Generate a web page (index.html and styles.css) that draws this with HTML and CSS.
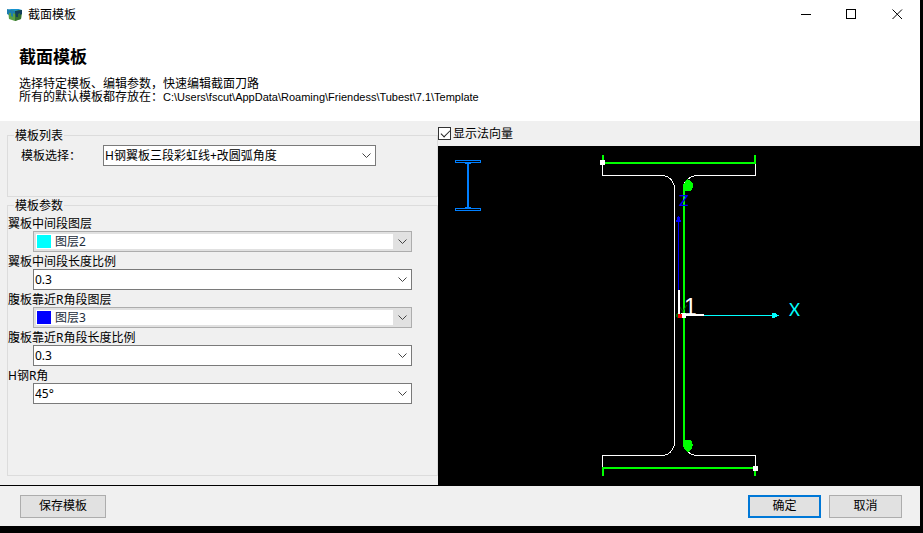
FILE: index.html
```html
<!DOCTYPE html>
<html lang="zh-CN">
<head>
<meta charset="utf-8">
<title>截面模板</title>
<link rel="stylesheet" href="styles.css">
</head>
<body>
<div class="window">
  <header class="titlebar">
    <svg class="app-icon" width="16" height="14" viewBox="0 0 16 14" aria-hidden="true">
      <path d="M1 2 15 2 14 11 8 13 2 11z" fill="#5aa046"/>
      <path d="M8 3 15 2l-1 9-6 2z" fill="#35702f"/>
      <path d="M8 3 15 2v4l-2 1V5l-2 1v3L9 9z" fill="#123f5c"/>
      <path d="M0 1H15L8 3z" fill="#1793cf"/>
      <path d="M0 1 8 3v3L6 5v4L4 8V5H2v2L0 6z" fill="#1c7eae"/>
    </svg>
    <span class="titlebar-text">截面模板</span>
    <div class="window-controls">
      <button type="button" aria-label="最小化"><svg width="11" height="11"><path d="M1 5.500H11"/></svg></button>
      <button type="button" aria-label="最大化"><svg width="11" height="11"><path d="M.5.5h9v9h-9z"/></svg></button>
      <button type="button" aria-label="关闭"><svg class="smooth" width="11" height="11"><path d="M.5.5l9.500 9.500M10 .5.5 10"/></svg></button>
    </div>
  </header>
  <section class="intro">
    <h1>截面模板</h1>
    <p>选择特定模板、编辑参数，快速编辑截面刀路</p>
    <p>所有的默认模板都存放在：<span class="path">C:\Users\fscut\AppData\Roaming\Friendess\Tubest\7.1\Template</span></p>
  </section>
  <main class="content">
    <form class="settings">
      <fieldset class="group">
        <legend>模板列表</legend>
        <div class="template-row">
          <label for="template">模板选择：</label>
          <div class="combo">
            <select id="template"><option>H钢翼板三段彩虹线+改圆弧角度</option></select>
            <svg class="chevron" width="9" height="6"><path d="M.5.5l4 4 4-4"/></svg>
          </div>
        </div>
      </fieldset>
      <fieldset class="group params">
        <legend>模板参数</legend>
        <label for="flange-layer">翼板中间段图层</label>
        <div class="combo layer">
          <span class="swatch cyan"></span>
          <select id="flange-layer"><option>图层2</option></select>
          <svg class="chevron" width="9" height="6"><path d="M.5.5l4 4 4-4"/></svg>
        </div>
        <label for="flange-ratio">翼板中间段长度比例</label>
        <div class="combo">
          <select id="flange-ratio"><option>0.3</option></select>
          <svg class="chevron" width="9" height="6"><path d="M.5.5l4 4 4-4"/></svg>
        </div>
        <label for="web-layer">腹板靠近R角段图层</label>
        <div class="combo layer">
          <span class="swatch blue"></span>
          <select id="web-layer"><option>图层3</option></select>
          <svg class="chevron" width="9" height="6"><path d="M.5.5l4 4 4-4"/></svg>
        </div>
        <label for="web-ratio">腹板靠近R角段长度比例</label>
        <div class="combo">
          <select id="web-ratio"><option>0.3</option></select>
          <svg class="chevron" width="9" height="6"><path d="M.5.5l4 4 4-4"/></svg>
        </div>
        <label for="r-angle">H钢R角</label>
        <div class="combo">
          <select id="r-angle"><option>45°</option></select>
          <svg class="chevron" width="9" height="6"><path d="M.5.5l4 4 4-4"/></svg>
        </div>
      </fieldset>
    </form>
    <section class="preview">
      <label class="normal-toggle"><input type="checkbox" checked>显示法向量</label>
      <svg class="drawing" viewBox="0 0 482 339" role="img" aria-label="H钢截面">
        <g class="thumb">
          <rect x="17.500" y="14.500" width="25" height="2"/>
          <rect x="17.500" y="62.500" width="25" height="2"/>
          <path d="M27 17.500h6M27 61.500h6"/>
          <path class="thick" d="M30 18v44"/>
        </g>
        <path class="profile" d="M164.500 17V29.500H224A12.500 13.500 0 0 1 236.500 43V296A12.500 13.500 0 0 1 224 309.500H164.500V322"/>
        <path class="profile" d="M317.500 17V29.500H258Q251 30 246 38M317.500 322V309.500H258Q251 309 246 301"/>
        <path class="axis-z" d="M240.500 74V144"/>
        <path class="fill-z" d="M240 70H241L243.500 76H237.500z"/>
        <path class="cut" d="M165 9V17H317M317 9V18M246 40V298M165 330V322H317M317 322V330"/>
        <path class="fill-cut" d="M245 39 247 36 249.500 33 252 34.500 255 37.500V41L253 45H247L245 44z"/>
        <path class="fill-cut" d="M247 294H253L255 299 254 302 250 306 247 304 245 300z"/>
        <text class="label-z" x="241" y="60">Z</text>
        <text class="label-y" x="240" y="170">Y</text>
        <circle cx="241" cy="169.500" r="3" fill="#006400"/>
        <path class="origin" d="M241 144V169H266"/>
        <rect class="node" x="243" y="167" width="5" height="5"/>
        <rect x="240" y="168" width="4" height="4" fill="#f00"/>
        <path class="axis-x" d="M266 169.500H336"/>
        <path class="fill-x" d="M334 166.500H336L341 169.500 336 172H334z"/>
        <text class="label-x" x="351" y="170">X</text>
        <text class="label-index" x="246" y="169">1</text>
        <rect class="node" x="162" y="14" width="5" height="5"/>
        <rect class="node" x="315" y="320" width="5" height="5"/>
      </svg>
    </section>
  </main>
  <footer class="actions">
    <button type="button" class="save">保存模板</button>
    <button type="button" class="primary">确定</button>
    <button type="button">取消</button>
  </footer>
</div>
</body>
</html>
```
FILE: styles.css
```css
* { box-sizing: border-box; }

body {
  margin: 0;
  background: #000;
  color: #000;
  font: 12px/16px "Noto Sans", "Noto Sans CJK SC", sans-serif;
}

h1, p { margin: 0; }

button, select, input { font: inherit; color: inherit; }

.window {
  display: flex;
  flex-direction: column;
  min-height: calc(100vh - 7px);
  margin-right: 3px;
  background: #f0f0f0;
}

.titlebar {
  display: flex;
  align-items: center;
  height: 29px;
  padding-left: 7px;
  background: #fff;
}

.titlebar-text { margin-left: 5px; }

.window-controls { display: flex; margin-left: auto; }

.window-controls button {
  display: grid;
  place-items: center;
  width: 46px;
  height: 29px;
  padding: 0;
  border: 0;
  background: none;
}

.window-controls svg {
  fill: none;
  stroke: #000;
  shape-rendering: crispEdges;
}

.window-controls .smooth { shape-rendering: auto; }

.intro {
  height: 92px;
  padding: 16px 19px 0;
  background: #fff;
}

.intro h1 {
  margin-bottom: 8px;
  font-size: 17px;
  line-height: 24px;
}

.intro p { line-height: 13px; }

.path { font-family: "Liberation Sans", sans-serif; font-size: 11px; }

.content {
  display: grid;
  grid-template-columns: 438fr 482fr;
  flex: 1;
}

.settings {
  display: flex;
  flex-direction: column;
  min-width: 0;
  padding: 6px 0 9px 7px;
}

.group {
  min-width: 0;
  height: 70px;
  margin: 0;
  padding: 0;
  border: 1px solid #dcdcdc;
}

.group legend {
  margin-left: 6px;
  padding: 0 1px;
  line-height: 17px;
}

.template-row {
  display: flex;
  align-items: center;
  padding: 1px 61px 0 13px;
}

.template-row label { flex: 0 0 82px; }

.template-row .combo { flex: 1; }

.params { flex: 1; height: auto; }

.params label {
  display: block;
  height: 17px;
  line-height: 19px;
}

.params .combo { margin: 0 25px; }

.combo {
  display: flex;
  position: relative;
  height: 21px;
  border: 1px solid #7a7a7a;
  background: #fff;
}

.combo select {
  flex: 1;
  min-width: 0;
  padding: 0 20px 0 1px;
  border: 0;
  border-radius: 0;
  background: transparent;
  appearance: none;
}

.chevron {
  position: absolute;
  right: 4px;
  top: 7px;
  fill: none;
  stroke: #444;
  pointer-events: none;
}

.layer {
  padding: 2px 18px 2px 2px;
  border-color: #adadad;
  background: #e1e1e1;
}

.layer select {
  padding: 0 0 0 3px;
  background: #fff;
  color: #222b3a;
}

.swatch {
  width: 16px;
  border: 1px solid #fff;
}

.cyan { background: #0ff; }

.blue { background: #00f; }

.preview {
  display: flex;
  flex-direction: column;
  min-width: 0;
}

.normal-toggle {
  display: flex;
  align-items: center;
  gap: 2px;
  height: 25px;
}

.normal-toggle input {
  width: 13px;
  height: 13px;
  margin: 0;
  border: 1px solid #333;
  background: #fff;
  appearance: none;
}

.normal-toggle input:checked::before {
  content: "";
  display: block;
  width: 8px;
  height: 4px;
  margin: 2px 0 0 2px;
  border: solid #222;
  border-width: 0 0 1px 1px;
  transform: rotate(-45deg);
}

.drawing {
  flex: 1;
  width: 100%;
  min-height: 0;
  background: #000;
  fill: none;
  shape-rendering: crispEdges;
}

.thumb { stroke: #007fff; }

.thick, .cut, .origin { stroke-width: 2; }

.profile, .origin { stroke: #fff; }

.cut { stroke: #0f0; }

.fill-cut { fill: #0f0; }

.axis-z { stroke: #00f; }

.fill-z { fill: #00f; }

.axis-x { stroke: #0ff; }

.fill-x { fill: #0ff; }

.node { fill: #fff; }

.drawing text { font: 17px Lato, sans-serif; }

.drawing .label-z { fill: #00f; font-size: 16px; }

.drawing .label-y { fill: #006400; font-size: 16px; font-weight: 300; }

.label-x { fill: #0ff; }

.drawing .label-index { fill: #fff; font: 23px "Liberation Sans", sans-serif; }

.actions {
  display: flex;
  align-items: center;
  gap: 8px;
  height: 41px;
  padding: 0 18px 0 20px;
  border-top: 1px solid #000;
}

.actions button {
  width: 73px;
  height: 23px;
  padding: 0;
  border: 1px solid #adadad;
  background: #e1e1e1;
}

.actions .save { width: 86px; margin-right: auto; }

.actions .primary { border: 2px solid #0078d7; }
```
